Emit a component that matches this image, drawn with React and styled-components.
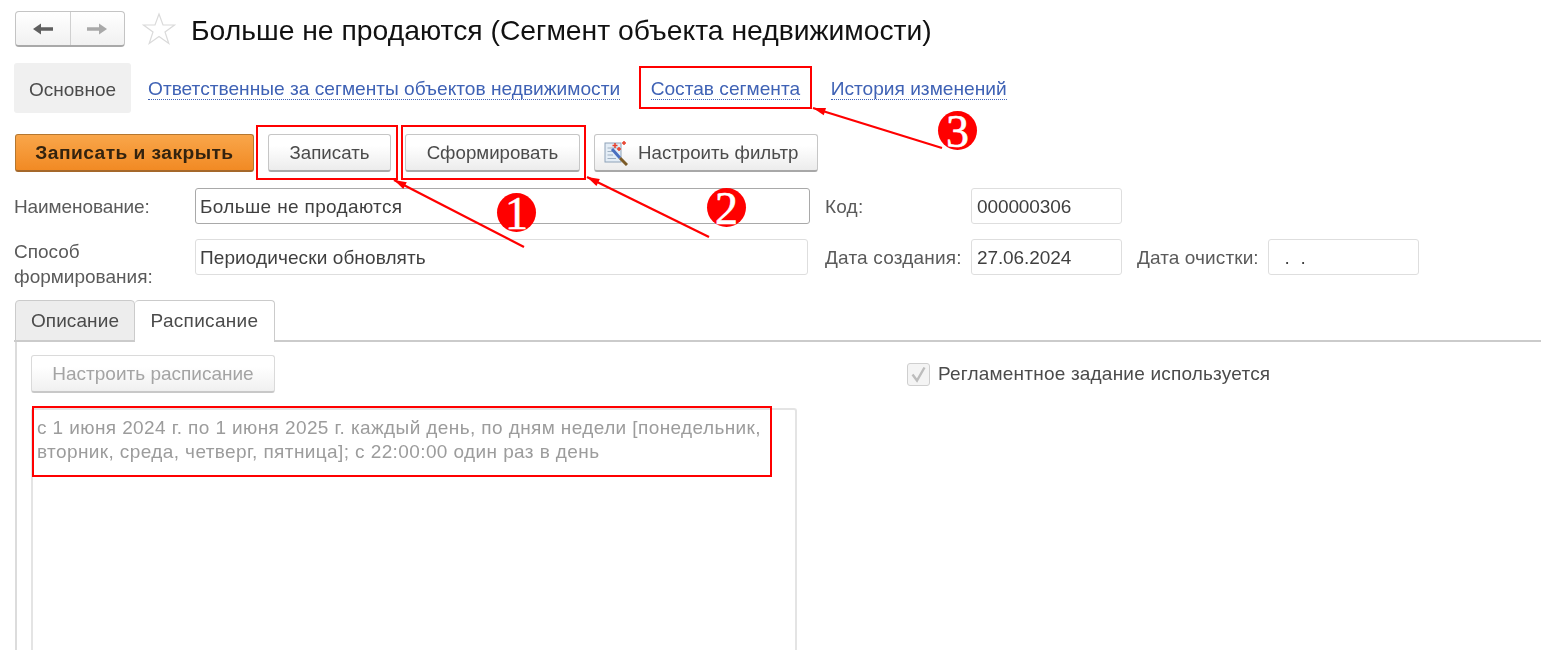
import styled, { createGlobalStyle } from "styled-components";

const GlobalStyle = createGlobalStyle`
  html, body {
    margin: 0;
    background: #fff;
    overflow: hidden;
  }
  * {
    box-sizing: border-box;
  }
`;

const Page = styled.div`
  position: relative;
  width: 1541px;
  height: 650px;
  overflow: hidden;
  font-family: "Liberation Sans", Arial, sans-serif;
  color: #4b4b4b;
`;

const Content = styled.div`
  display: flex;
  flex-direction: column;
  height: 650px;
  padding: 11px 0 0 14px;
  filter: blur(0.45px);
`;

/* шапка */
const Header = styled.header`
  display: flex;
  align-items: center;
  height: 36px;
`;

const NavGroup = styled.div`
  display: flex;
  width: 110px;
  height: 36px;
  margin-left: 1px;
  border: 1px solid #c4c4c4;
  border-bottom: 2px solid #a9a9a9;
  border-radius: 4px;
  background: linear-gradient(#fff, #f1f1f1);
`;

const NavButton = styled.div`
  flex: 1;
  display: flex;
  align-items: center;
  justify-content: center;
  & + & {
    border-left: 1px solid #d0d0d0;
  }
`;

const StarWrap = styled.div`
  display: flex;
  margin-left: 17px;
`;

const Title = styled.h1`
  margin: 2px 0 0 15px;
  font-size: 28.3px;
  font-weight: 400;
  color: #111;
  white-space: nowrap;
`;

/* панель разделов */
const SectionBar = styled.nav`
  display: flex;
  align-items: center;
  height: 50px;
  margin-top: 16px;
`;

const ActiveSection = styled.div`
  display: flex;
  align-items: center;
  justify-content: center;
  width: 117px;
  height: 50px;
  margin-right: 17px;
  padding-top: 3px;
  border-radius: 3px;
  background: #f0f0f0;
  font-size: 19px;
`;

const SectionLink = styled.a`
  margin: 3px 30.5px 0 0;
  color: #3f62b5;
  font-size: 19.15px;
  white-space: nowrap;
  border-bottom: 1px dotted #3f62b5;
  line-height: 20px;
`;

/* кнопки */
const Toolbar = styled.div`
  display: flex;
  gap: 14px;
  margin: 21px 0 0 1px;
`;

const Button = styled.div`
  display: flex;
  align-items: center;
  justify-content: center;
  width: ${(p) => p.$w}px;
  height: 38px;
  border: 1px solid #c6c6c6;
  border-bottom: 2px solid #a8a8a8;
  border-radius: 3px;
  background: linear-gradient(#fff 30%, #ececec);
  font-size: 18.7px;
  white-space: nowrap;
`;

const PrimaryButton = styled(Button)`
  border: 1px solid #b5772f;
  border-bottom: 2px solid #a5682a;
  background: linear-gradient(#f9a64a, #f18a24);
  color: #33230f;
  font-size: 19.2px;
  font-weight: 700;
  letter-spacing: 0.45px;
`;

const FilterButton = styled(Button)`
  justify-content: flex-start;
  gap: 10px;
  padding-left: 9px;
`;

const DisabledButton = styled(Button)`
  border-color: #dadada;
  border-bottom-color: #c8c8c8;
  background: linear-gradient(#fff 30%, #f0f0f0);
  color: #a4a4a4;
  font-size: 19px;
`;

/* поля формы */
const FormGrid = styled.div`
  display: grid;
  grid-template-columns: 181px 615px 15px 146px 151px 15px 131px 151px;
  grid-auto-rows: 36px;
  row-gap: 15px;
  align-items: center;
  margin-top: 16px;
`;

const Label = styled.label`
  grid-column: ${(p) => p.$col};
  padding-top: 1px;
  font-size: 19px;
  line-height: 24px;
  letter-spacing: ${(p) => p.$ls || 0}px;
  color: #5a5a5a;
  white-space: nowrap;
`;

const TwoLineLabel = styled(Label)`
  align-self: start;
  padding-top: 0;
  line-height: 25px;
`;

const Input = styled.div`
  display: flex;
  align-items: center;
  height: 36px;
  padding: 1px 0 0 ${(p) => p.$pl || 4}px;
  border: 1px solid ${(p) => (p.$strong ? "#a9a9a9" : "#dedede")};
  border-radius: 3px;
  background: #fff;
  font-size: 19px;
  letter-spacing: ${(p) => p.$ls || 0}px;
  color: #3f3f3f;
  grid-column: ${(p) => p.$col};
  margin-right: ${(p) => p.$mr || 0}px;
`;

/* вкладки */
const TabBar = styled.div`
  display: flex;
  height: 42px;
  margin-top: 25px;
  padding-left: 1px;
  border-bottom: 2px solid #cbcbcb;
`;

const Tab = styled.div`
  display: flex;
  align-items: center;
  justify-content: center;
  width: ${(p) => p.$w}px;
  height: ${(p) => (p.$active ? 42 : 41)}px;
  padding-bottom: ${(p) => (p.$active ? 2 : 0)}px;
  border: 1px solid #cbcbcb;
  border-left-width: ${(p) => (p.$active ? 0 : 1)}px;
  border-bottom: ${(p) => (p.$active ? "none" : "1px solid #cbcbcb")};
  border-radius: 4px 4px 0 0;
  background: ${(p) => (p.$active ? "#fff" : "#ededed")};
  font-size: 19px;
  letter-spacing: ${(p) => (p.$active ? 0.3 : 0.1)}px;
`;

const TabBody = styled.div`
  flex: 1;
  display: grid;
  grid-template-columns: 766px 1fr;
  column-gap: 110px;
  grid-template-rows: 38px 1fr;
  row-gap: 15px;
  margin-left: 1px;
  padding: 13px 0 0 14px;
  border-left: 2px solid #dcdcdc;
`;

const ScheduleButton = styled(DisabledButton)`
  grid-column: 1;
`;

const CheckRow = styled.div`
  display: flex;
  align-items: center;
  gap: 8px;
  font-size: 19px;
  letter-spacing: 0.2px;
`;

const Checkbox = styled.div`
  display: flex;
  align-items: center;
  justify-content: center;
  width: 23px;
  height: 23px;
  border: 1px solid #cfcfcf;
  border-radius: 3px;
  background: #f4f4f4;
`;

const Memo = styled.div`
  grid-column: 1;
  padding: 6px 4px;
  border: 2px solid #e4e4e4;
  border-bottom: none;
  border-radius: 3px 3px 0 0;
  font-size: 19px;
  line-height: 24px;
  letter-spacing: 0.4px;
  color: #9c9c9c;
  white-space: nowrap;
`;

/* пометки поверх скриншота */
const Frame = styled.div`
  position: absolute;
  left: ${(p) => p.$x}px;
  top: ${(p) => p.$y}px;
  width: ${(p) => p.$w}px;
  height: ${(p) => p.$h}px;
  border: 2px solid #f00;
`;

const Arrows = styled.svg`
  position: absolute;
  left: 0;
  top: 0;
`;

const Badge = styled.div`
  position: absolute;
  left: ${(p) => p.$x}px;
  top: ${(p) => p.$y}px;
  width: 39px;
  height: 39px;
  display: flex;
  align-items: center;
  justify-content: center;
  padding-top: 1px;
  border-radius: 50%;
  background: #f00;
  color: #fff;
  font-family: "Liberation Serif", serif;
  font-size: 46px;
  line-height: 39px;
  -webkit-text-stroke: 0.6px #fff;
`;

const ArrowIcon = ({ color, flip }) => (
  <svg width="22" height="14" viewBox="0 0 22 14" style={flip ? { transform: "scaleX(-1)" } : undefined}>
    <path d="M1 7 9 1.5V5.3H21V8.7H9V12.5Z" fill={color} />
  </svg>
);

const StarIcon = () => (
  <svg width="34" height="34" viewBox="0 0 34 34">
    <path
      d="M17 2 21 13H32.5L23 20 26.8 31.5 17 24.4 7.2 31.5 11 20 1.5 13H13Z"
      fill="#fff"
      stroke="#dadada"
      strokeWidth="1.2"
    />
  </svg>
);

const WandIcon = () => (
  <svg width="24" height="26" viewBox="0 0 24 26">
    <rect x="1" y="3" width="16" height="19" fill="#e4edf6" stroke="#8ea2b8" />
    <path d="M3.5 8H14M3.5 11.5H9M3.5 15H9M3.5 18.5H12" stroke="#9fb0c2" />
    <path d="M8 9 16 18" stroke="#4a6fc0" strokeWidth="3" />
    <path d="M16 18 23 25" stroke="#7b5a26" strokeWidth="3" />
    <path d="M11 3v5M8.5 5.5h5M20 1v4M18 3h4M15 7v4M13 9h4" stroke="#e8402c" strokeWidth="1.5" />
  </svg>
);

const CheckIcon = () => (
  <svg width="17" height="17" viewBox="0 0 17 17">
    <path d="M2.5 8.5 7 14.5 14.5 1.5" fill="none" stroke="#bdbdbd" strokeWidth="2.4" />
  </svg>
);

const Arrow = ({ x1, y1, x2, y2 }) => {
  const a = Math.atan2(y2 - y1, x2 - x1);
  const head = (d, s) => `${x2 - 13 * Math.cos(a + s * d)},${y2 - 13 * Math.sin(a + s * d)}`;
  return (
    <>
      <line x1={x1} y1={y1} x2={x2} y2={y2} stroke="#f00" strokeWidth="2.3" />
      <polygon points={`${x2},${y2} ${head(0.3, 1)} ${head(0.3, -1)}`} fill="#f00" />
    </>
  );
};

const App = () => (
  <Page>
    <GlobalStyle />
    <Content>
      <Header>
        <NavGroup>
          <NavButton>
            <ArrowIcon color="#5f5f5f" />
          </NavButton>
          <NavButton>
            <ArrowIcon color="#a9a9a9" flip />
          </NavButton>
        </NavGroup>
        <StarWrap>
          <StarIcon />
        </StarWrap>
        <Title>Больше не продаются (Сегмент объекта недвижимости)</Title>
      </Header>

      <SectionBar>
        <ActiveSection>Основное</ActiveSection>
        <SectionLink>Ответственные за сегменты объектов недвижимости</SectionLink>
        <SectionLink>Состав сегмента</SectionLink>
        <SectionLink>История изменений</SectionLink>
      </SectionBar>

      <Toolbar>
        <PrimaryButton $w={239}>Записать и закрыть</PrimaryButton>
        <Button $w={123}>Записать</Button>
        <Button $w={175}>Сформировать</Button>
        <FilterButton $w={224}>
          <WandIcon />
          Настроить фильтр
        </FilterButton>
      </Toolbar>

      <FormGrid>
        <Label $col="1" $ls={-0.1}>Наименование:</Label>
        <Input $col="2" $strong $ls={0.35}>
          Больше не продаются
        </Input>
        <Label $col="4" $ls={0.2}>Код:</Label>
        <Input $col="5" $pl={5} $ls={-0.1}>000000306</Input>

        <TwoLineLabel $col="1">
          Способ
          <br />
          формирования:
        </TwoLineLabel>
        <Input $col="2" $mr={2} $ls={0.1}>
          Периодически обновлять
        </Input>
        <Label $col="4" $ls={0.2}>Дата создания:</Label>
        <Input $col="5" $pl={5} $ls={-0.1}>27.06.2024</Input>
        <Label $col="7" $ls={0.1}>Дата очистки:</Label>
        <Input $col="8" $pl={5}>&nbsp;&nbsp;.&nbsp;&nbsp;.</Input>
      </FormGrid>

      <TabBar>
        <Tab $w={120}>Описание</Tab>
        <Tab $w={140} $active>
          Расписание
        </Tab>
      </TabBar>

      <TabBody>
        <ScheduleButton $w={244}>Настроить расписание</ScheduleButton>
        <CheckRow>
          <Checkbox>
            <CheckIcon />
          </Checkbox>
          Регламентное задание используется
        </CheckRow>
        <Memo>
          с 1 июня 2024 г. по 1 июня 2025 г. каждый день, по дням недели [понедельник,
          <br />
          вторник, среда, четверг, пятница]; с 22:00:00 один раз в день
        </Memo>
      </TabBody>
    </Content>

    <Frame $x={256} $y={125} $w={142} $h={55} />
    <Frame $x={401} $y={125} $w={185} $h={55} />
    <Frame $x={639} $y={66} $w={173} $h={43} />
    <Frame $x={32} $y={406} $w={740} $h={71} />

    <Arrows width="1541" height="650">
      <Arrow x1={524} y1={247} x2={394} y2={180} />
      <Arrow x1={709} y1={237} x2={587} y2={177} />
      <Arrow x1={942} y1={148} x2={813} y2={108} />
    </Arrows>

    <Badge $x={497} $y={193}>1</Badge>
    <Badge $x={707} $y={188}>2</Badge>
    <Badge $x={938} $y={111}>3</Badge>
  </Page>
);

export default App;
